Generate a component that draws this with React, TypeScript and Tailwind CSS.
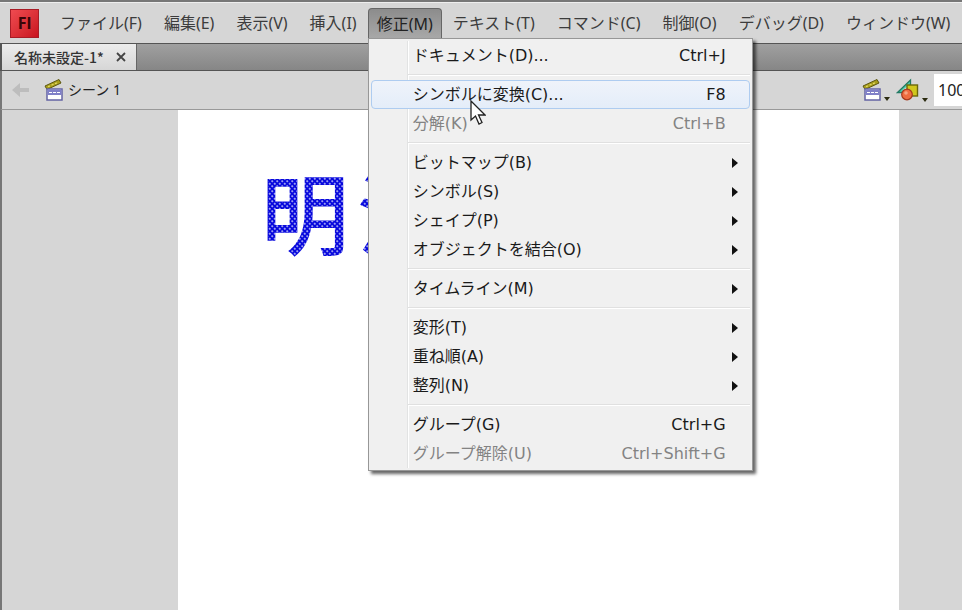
import type { ReactNode } from "react";

const menus = [
  "ファイル(F)",
  "編集(E)",
  "表示(V)",
  "挿入(I)",
  "修正(M)",
  "テキスト(T)",
  "コマンド(C)",
  "制御(O)",
  "デバッグ(D)",
  "ウィンドウ(W)",
];

type Item = {
  label: string;
  keys?: string;
  sub?: boolean;
  disabled?: boolean;
  active?: boolean;
};

const groups: Item[][] = [
  [{ label: "ドキュメント(D)...", keys: "Ctrl+J" }],
  [
    { label: "シンボルに変換(C)...", keys: "F8", active: true },
    { label: "分解(K)", keys: "Ctrl+B", disabled: true },
  ],
  [
    { label: "ビットマップ(B)", sub: true },
    { label: "シンボル(S)", sub: true },
    { label: "シェイプ(P)", sub: true },
    { label: "オブジェクトを結合(O)", sub: true },
  ],
  [{ label: "タイムライン(M)", sub: true }],
  [
    { label: "変形(T)", sub: true },
    { label: "重ね順(A)", sub: true },
    { label: "整列(N)", sub: true },
  ],
  [
    { label: "グループ(G)", keys: "Ctrl+G" },
    { label: "グループ解除(U)", keys: "Ctrl+Shift+G", disabled: true },
  ],
];

function SceneIcon() {
  return (
    <svg width="20" height="22" viewBox="0 0 20 22" aria-hidden="true">
      <path d="M1 7 L15 0.500 L17 4 L3 10.500 Z" fill="#a89e1c" stroke="#5c5610" />
      <path d="M4 7.500 L6 7 M7.500 6 L9.500 5.500 M11 4.500 L13 4" stroke="#e8e070" strokeWidth="1.200" />
      <rect x="3" y="10" width="15" height="11" fill="#fff" stroke="#6464a4" strokeWidth="1.500" />
      <rect x="3.500" y="10.500" width="14" height="5.500" fill="#8080c8" />
      <path d="M5 13.500 H16" stroke="#fff" strokeDasharray="3 1" />
    </svg>
  );
}

function SymbolIcon() {
  return (
    <svg width="24" height="24" viewBox="0 0 24 24" aria-hidden="true">
      <path d="M1.500 14.500 L14.500 2 V14.500 Z" fill="#4fcfae" stroke="#237a64" strokeWidth="1.300" />
      <path d="M6.500 12.500 L12 7.500 V12.500 Z" fill="#d4efe6" />
      <rect x="11" y="7" width="10.500" height="11" fill="#d0c71c" stroke="#6b680a" strokeWidth="1.400" />
      <circle cx="11" cy="16.500" r="5.300" fill="#ef6c40" stroke="#a5381c" strokeWidth="1.200" />
      <circle cx="10" cy="15" r="1.800" fill="#f8a482" />
    </svg>
  );
}

function ToolButton({ label, children }: { label: string; children: ReactNode }) {
  return (
    <button type="button" aria-label={label} className="flex items-end gap-0.5">
      {children}
      <svg width="6" height="4" viewBox="0 0 6 4" aria-hidden="true">
        <path d="M0 0 H6 L3 4 Z" fill="#2b2b10" />
      </svg>
    </button>
  );
}

function MenuRow({ item }: { item: Item }) {
  return (
    <button
      type="button"
      role="menuitem"
      disabled={item.disabled}
      className={
        item.active
          ? "flex h-[29px] w-full items-center rounded-sm border border-[#aeccf0] bg-linear-to-b from-[#eff3fa] to-[#e4edf9] pr-[23px] pl-[41px]"
          : "flex h-[29px] w-full items-center border border-transparent pr-[23px] pl-[41px] disabled:text-[#838383]"
      }
    >
      <span className="flex-1 text-left">{item.label}</span>
      {item.keys && <span>{item.keys}</span>}
      {item.sub && (
        <svg width="6" height="10" viewBox="0 0 6 10" className="-mr-3" aria-hidden="true">
          <path d="M0 0 L6 5 L0 10 Z" fill="#111" />
        </svg>
      )}
    </button>
  );
}

function ModifyMenu() {
  return (
    <div
      role="menu"
      className="absolute top-full left-0 z-10 w-[385px] border border-[#979797] bg-[#f0f0f0] p-[2px] font-['DejaVu_Sans','Noto_Sans_CJK_JP',sans-serif] text-base text-[#1a1a1a] shadow-[3px_3px_3px_#0009]"
    >
      <div className="bg-[linear-gradient(to_right,transparent_36px,#e2e3e3_36px,#e2e3e3_37px,#fff_37px,#fff_38px,transparent_38px)]">
        {groups.map((group, i) => (
          <div key={i}>
            {i > 0 && (
              <div role="separator" className="ml-[37px] py-1">
                <div className="h-[2px] border-t border-[#e0e0e0] bg-white" />
              </div>
            )}
            {group.map((item) => (
              <MenuRow key={item.label} item={item} />
            ))}
          </div>
        ))}
      </div>
      <svg
        width="16"
        height="26"
        viewBox="0 0 16 26"
        className="absolute top-[61px] left-[101px]"
        aria-hidden="true"
      >
        <path
          d="M1 1 V20 L5.500 16 L9 24 L12 22.500 L8.500 15 H15 Z"
          fill="#fff"
          stroke="#222"
          strokeWidth="1.300"
        />
      </svg>
    </div>
  );
}

export default function App() {
  return (
    <div className="flex min-h-screen flex-col overflow-hidden border-t-2 border-[#777] bg-[#d6d6d6] font-['Noto_Sans','Noto_Sans_CJK_JP',sans-serif]">
      <header className="flex h-[41px] items-center border-t border-[#eee] pl-2.5">
        <div className="flex size-[29px] shrink-0 items-center justify-center border border-[#a81c26] bg-linear-to-br from-[#f04a50] to-[#c9101f] font-['Open_Sans',sans-serif] text-base font-bold text-[#3a0508]">
          Fl
        </div>
        <nav className="mb-[5px] ml-2.5 flex self-end text-base whitespace-nowrap text-[#3c3c3c]">
          {menus.map((name) =>
            name === "修正(M)" ? (
              <div key={name} className="relative">
                <button
                  type="button"
                  aria-expanded="true"
                  className="h-[30px] rounded-t-sm border border-b-0 border-[#666] bg-linear-to-b from-[#8c8c8c] to-[#a8a8a8] px-2 text-[#222]"
                >
                  {name}
                </button>
                <ModifyMenu />
              </div>
            ) : (
              <button key={name} type="button" className="h-[30px] px-[11px]">
                {name}
              </button>
            ),
          )}
        </nav>
      </header>

      <div className="flex h-7 border-y border-l-2 border-[#555] bg-linear-to-b from-[#a0a0a0] to-[#868686] font-['Noto_Sans_CJK_JP',sans-serif]">
        <div className="flex items-center gap-3 border-r border-[#666] bg-linear-to-b from-[#ececec] to-[#d6d6d6] pr-2.5 pl-3 text-sm font-medium text-[#333]">
          <span>名称未設定-1*</span>
          <button type="button" aria-label="閉じる">
            <svg width="10" height="10" viewBox="0 0 10 10" aria-hidden="true">
              <path d="M1 1 L9 9 M9 1 L1 9" stroke="#444" strokeWidth="1.800" />
            </svg>
          </button>
        </div>
      </div>

      <div className="flex h-[39px] items-center border-b border-l-2 border-b-[#999] border-l-[#777] text-sm">
        <button type="button" aria-label="戻る" disabled className="ml-2.5">
          <svg width="18" height="14" viewBox="0 0 18 14" aria-hidden="true">
            <path d="M0 7 L8 0 V5 H17 V9 H8 V14 Z" fill="#bdbdbd" />
          </svg>
        </button>
        <div className="ml-3.5 flex flex-1 items-center gap-1 text-[#222]">
          <SceneIcon />
          <span>シーン 1</span>
        </div>
        <div className="flex items-center gap-1.5">
          <ToolButton label="シーンの編集">
            <SceneIcon />
          </ToolButton>
          <ToolButton label="シンボルの編集">
            <SymbolIcon />
          </ToolButton>
          <input
            aria-label="ズーム"
            defaultValue="100%"
            className="h-8 w-7 bg-white pl-1 text-base text-[#222]"
          />
        </div>
      </div>

      <main className="flex flex-1 border-l-2 border-[#777] pr-[63px] pl-44">
        <div className="flex-1 bg-white pt-[50px] pl-[83px]">
          <p className="inline-flex gap-2 bg-[#0808dd] bg-[radial-gradient(circle_at_25%_25%,#9a9ef0_0.5px,transparent_1.5px),radial-gradient(circle_at_75%_75%,#9a9ef0_0.5px,transparent_1.5px)] bg-[size:5px_5px] bg-clip-text font-['Noto_Sans_CJK_JP',sans-serif] text-[88px] leading-[100px] font-medium text-transparent">
            <span>明</span>
            <span>治</span>
          </p>
        </div>
      </main>
    </div>
  );
}
